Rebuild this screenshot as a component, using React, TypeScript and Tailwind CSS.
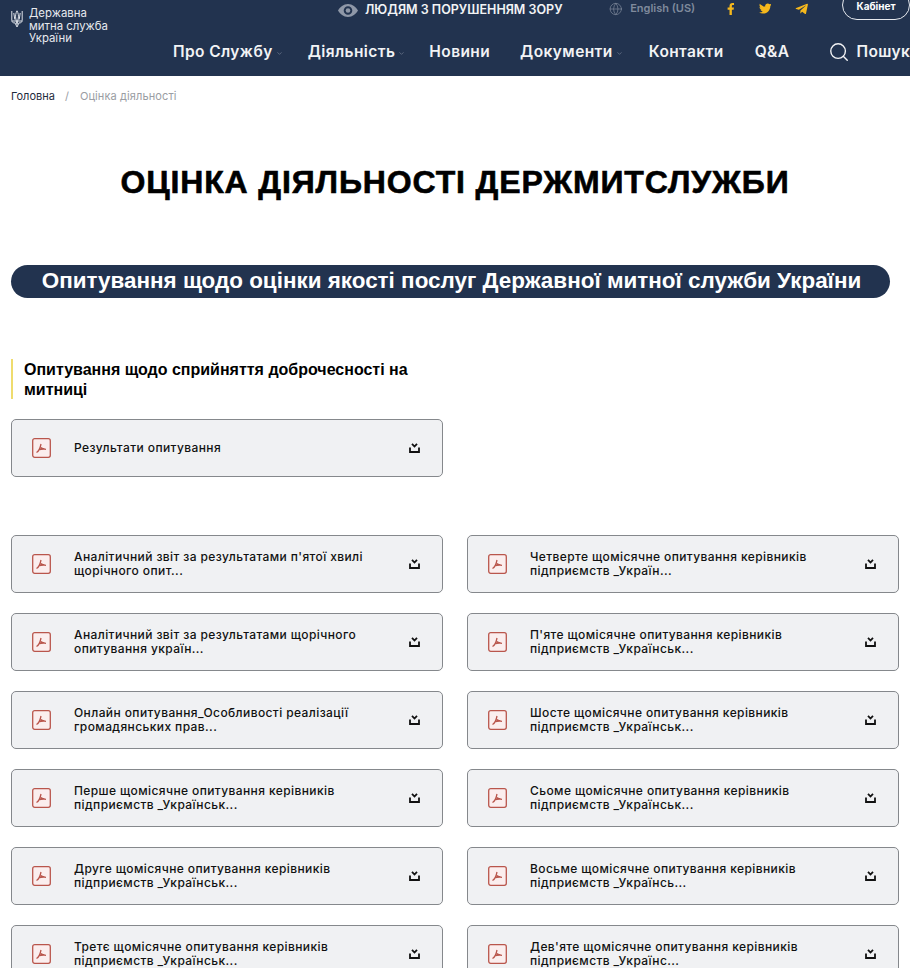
import React from 'react';
import { Search, Globe, ChevronDown } from 'lucide-react';
import { FaFacebookF, FaTwitter, FaTelegramPlane } from 'react-icons/fa';

const leftDocs = [
  ["Аналітичний звіт за результатами п'ятої хвилі", 'щорічного опит...'],
  ['Аналітичний звіт за результатами щорічного', 'опитування україн...'],
  ['Онлайн опитування_Особливості реалізації', 'громадянських прав...'],
  ['Перше щомісячне опитування керівників', 'підприємств _Українськ...'],
  ['Друге щомісячне опитування керівників', 'підприємств _Українськ...'],
  ['Третє щомісячне опитування керівників', 'підприємств _Українськ...'],
];

const rightDocs = [
  ['Четверте щомісячне опитування керівників', 'підприємств _Україн...'],
  ["П'яте щомісячне опитування керівників", 'підприємств _Українськ...'],
  ['Шосте щомісячне опитування керівників', 'підприємств _Українськ...'],
  ['Сьоме щомісячне опитування керівників', 'підприємств _Українськ...'],
  ['Восьме щомісячне опитування керівників', 'підприємств _Українсь...'],
  ["Дев'яте щомісячне опитування керівників", 'підприємств _Українс...'],
];

const Trident = () => (
  <svg width="12" height="18" viewBox="0 0 12 18" fill="none" stroke="#dfe3ea" strokeWidth="1" className="mt-[3px] ml-[1px] shrink-0">
    <path d="M.8 1v9.500c0 1.500 1.200 2.500 3 2.500M11.200 1v9.500c0 1.500-1.200 2.500-3 2.500M6 .8C4.800 3 4.300 5.500 4.700 8L6 14.500 7.300 8C7.700 5.500 7.200 3 6 .8zM3.800 12.500L6 17l2.200-4.500M2.800 3l1 6.500M9.200 3l-1 6.500M1 11h10" />
  </svg>
);

const EyeIcon = () => (
  <svg width="20" height="13" viewBox="0 0 20 13" className="ml-[165px] shrink-0">
    <path fillRule="evenodd" fill="#8f98a8" d="M10 0c4.500 0 8 3 10 6.500C18 10 14.500 13 10 13S2 10 0 6.500C2 3 5.500 0 10 0zm0 2.200a4.300 4.300 0 100 8.600 4.300 4.300 0 000-8.600z" />
    <circle cx="10" cy="6.500" r="2.300" fill="#8f98a8" />
  </svg>
);

const PdfIcon = () => (
  <svg width="19" height="20" viewBox="0 0 19 20" fill="none" className="shrink-0 -mt-[1px]">
    <rect x="0.7" y="0.7" width="17.600" height="18.600" rx="2" fill="#fbeeee" stroke="#b9564c" strokeWidth="1.300" />
    <path d="M4.500 14.500c2-1 3.500-3.500 4.500-8.500M9 9.500c1 1 2.500 1.700 5 1.800M6.500 12c2-.9 4-1.100 6-1" stroke="#b9564c" strokeWidth="1.300" />
  </svg>
);

const DownloadIcon = () => (
  <svg width="11" height="10" viewBox="0 0 11 10" fill="none" className="shrink-0">
    <path d="M3 .8l2.500 2.700L8 .8" stroke="#111" strokeWidth="1.800" />
    <path d="M1 4.500V9h9V4.500" stroke="#111" strokeWidth="1.800" />
  </svg>
);

const DocCard = ({ lines }: { lines: string[] }) => (
  <div className="h-[58px] flex items-center bg-[#f0f1f3] border border-[#85888c] rounded-[5px] pl-[20px] pr-[22px]">
    <PdfIcon />
    <p className="ml-[23px] flex-1 text-[12px] leading-[14px] tracking-[0.4px] font-medium text-[#111]">
      {lines.map((l) => (
        <span key={l} className="block whitespace-nowrap">{l}</span>
      ))}
    </p>
    <DownloadIcon />
  </div>
);

const NavItem = ({ label, arrow, className }: { label: string; arrow?: boolean; className: string }) => (
  <span className={`flex items-center font-semibold text-[15.500px] tracking-[0.4px] text-[#f2f3f5] whitespace-nowrap ${className}`}>
    {label}
    {arrow && <ChevronDown size={7} className="ml-[3px] mt-[2px] text-[#7f8a9c]" />}
  </span>
);

export default function App() {
  return (
    <div className="w-[923px] bg-white h-[968px] overflow-hidden font-['Inter',sans-serif]">
      <div className="w-[910px] h-full overflow-hidden">
        <header className="h-[76px] bg-[#22334f] flex">
          <div className="w-[173px] pl-[10px] pt-[7px] flex items-start shrink-0">
            <Trident />
            <p className="ml-[6px] text-[11.400px] leading-[12.500px] text-[#e6e9ee]">
              Державна<br />митна служба<br />України
            </p>
          </div>
          <div className="flex-1 min-w-0">
            <div className="h-[20px] flex items-center">
              <EyeIcon />
              <span className="ml-[7px] text-[12.500px] font-semibold text-[#f2f3f5] whitespace-nowrap">ЛЮДЯМ З ПОРУШЕННЯМ ЗОРУ</span>
              <Globe size={14} strokeWidth={1.200} className="ml-[46px] -mt-[3px] text-[#7f8a9c]" />
              <span className="ml-[8px] -mt-[3px] text-[11px] font-semibold text-[#7f8a9c] whitespace-nowrap">English (US)</span>
              <FaFacebookF size={12} className="ml-[30px] -mt-[3px] text-[#f5b81c]" />
              <FaTwitter size={13} className="ml-[22px] -mt-[3px] text-[#f5b81c]" />
              <FaTelegramPlane size={14} className="ml-[24px] -mt-[3px] text-[#f5b81c]" />
              <div className="ml-[33px] w-[68px] h-[30px] self-end shrink-0 border border-[#e6e9ee] rounded-[15px] flex items-end justify-center pb-[6px]">
                <span className="text-[10px] leading-[14px] font-bold text-white">Кабінет</span>
              </div>
            </div>
            <nav className="mt-[20px] h-[24px] flex items-center">
              <NavItem label="Про Службу" arrow className="" />
              <NavItem label="Діяльність" arrow className="ml-[25px]" />
              <NavItem label="Новини" className="ml-[24px]" />
              <NavItem label="Документи" arrow className="ml-[30px]" />
              <NavItem label="Контакти" className="ml-[26px]" />
              <NavItem label="Q&A" className="ml-[31px]" />
              <Search size={22} strokeWidth={1.500} className="ml-[39px] text-[#f2f3f5] shrink-0" />
              <NavItem label="Пошук" className="ml-[6px]" />
            </nav>
          </div>
        </header>

        <div className="pl-[11px] pt-[14px] text-[11px] leading-[13px] flex">
          <span className="text-[#1f2b3d]">Головна</span>
          <span className="ml-[10px] text-[#9a9da3]">/</span>
          <span className="ml-[11px] text-[#9a9da3] tracking-[0.01em]">Оцінка діяльності</span>
        </div>

        <h1 className="mt-[59px] text-center font-['Liberation_Sans',sans-serif] font-bold text-[32px] leading-[40px] text-black tracking-[0.86px] [-webkit-text-stroke:0.6px_black]">
          ОЦІНКА ДІЯЛЬНОСТІ ДЕРЖМИТСЛУЖБИ
        </h1>

        <div className="mt-[63px] ml-[11px] w-[879px] h-[33px] rounded-full bg-[#22334f] flex items-center justify-center pl-[2px]">
          <span className="font-['Liberation_Sans',sans-serif] font-bold text-[22.450px] text-white whitespace-nowrap -mt-[1px]">
            Опитування щодо оцінки якості послуг Державної митної служби України
          </span>
        </div>

        <div className="mt-[61px] ml-[11px] w-[432px] border-l-2 border-[#efdc6e] pl-[11px] pt-[1px] h-[40px] font-['Liberation_Sans',sans-serif] font-bold text-[16px] leading-[20px] text-black">
          Опитування щодо сприйняття доброчесності на митниці
        </div>

        <div className="mt-[20px] ml-[11px] w-[432px]">
          <DocCard lines={['Результати опитування']} />
        </div>

        <div className="mt-[58px] ml-[11px] w-[888px] grid grid-cols-2 gap-x-[24px] gap-y-[20px]">
          {leftDocs.map((l, i) => (
            <React.Fragment key={l[0]}>
              <DocCard lines={l} />
              <DocCard lines={rightDocs[i]} />
            </React.Fragment>
          ))}
        </div>
      </div>
    </div>
  );
}
